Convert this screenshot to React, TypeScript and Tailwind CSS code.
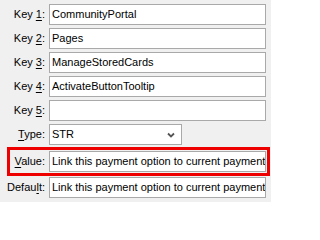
const font = { fontFamily: '"Liberation Sans", Arial, sans-serif' }

function Label({ pre, u, post, className = "w-[45px]" }: { pre: string; u: string; post: string; className?: string }) {
  return (
    <div className={`${className} shrink-0 text-right text-[11px] leading-none text-black`}>
      {pre}
      <span className="underline underline-offset-[2px]">{u}</span>
      {post}
    </div>
  )
}

function Field({ value }: { value: string }) {
  return (
    <div className="ml-[4px] flex h-[21px] w-[217px] shrink-0 items-center overflow-hidden whitespace-nowrap border border-[#a9a9a9] bg-white pl-[2px] text-[11px] text-black">
      {value}
    </div>
  )
}

export default function App() {
  const keys = [
    { n: "1", v: "CommunityPortal" },
    { n: "2", v: "Pages" },
    { n: "3", v: "ManageStoredCards" },
    { n: "4", v: "ActivateButtonTooltip" },
    { n: "5", v: "" },
  ]
  const text = "Link this payment option to current payment"

  return (
    <div className="h-[202px] w-[271px] overflow-hidden bg-[#f0f0f0] pt-[4px]" style={font}>
      <div className="flex flex-col gap-[3px]">
        {keys.map((k) => (
          <div key={k.n} className="flex items-center">
            <Label pre="Key " u={k.n} post=":" />
            <Field value={k.v} />
          </div>
        ))}
      </div>

      <div className="mt-[3px] flex items-center">
        <Label pre="" u="T" post="ype:" />
        <div className="ml-[4px] flex h-[21px] w-[133px] items-center justify-between border border-[#a9a9a9] bg-white pl-[2px] pr-[6px] text-[11px] text-black">
          <span>STR</span>
          <svg width="8" height="6" viewBox="0 0 8 6">
            <path d="M1 1.5 L4 4.5 L7 1.5" fill="none" stroke="#555" strokeWidth="1.8" />
          </svg>
        </div>
      </div>

      <div className="ml-[7px] mt-[2px] flex w-[263px] items-center border-[3px] border-[#ee0000] py-[1px]">
        <Label pre="" u="V" post="alue:" className="w-[35px]" />
        <Field value={text} />
      </div>

      <div className="mt-[1px] flex items-center">
        <Label pre="Defau" u="l" post="t:" />
        <Field value={text} />
      </div>
    </div>
  )
}
